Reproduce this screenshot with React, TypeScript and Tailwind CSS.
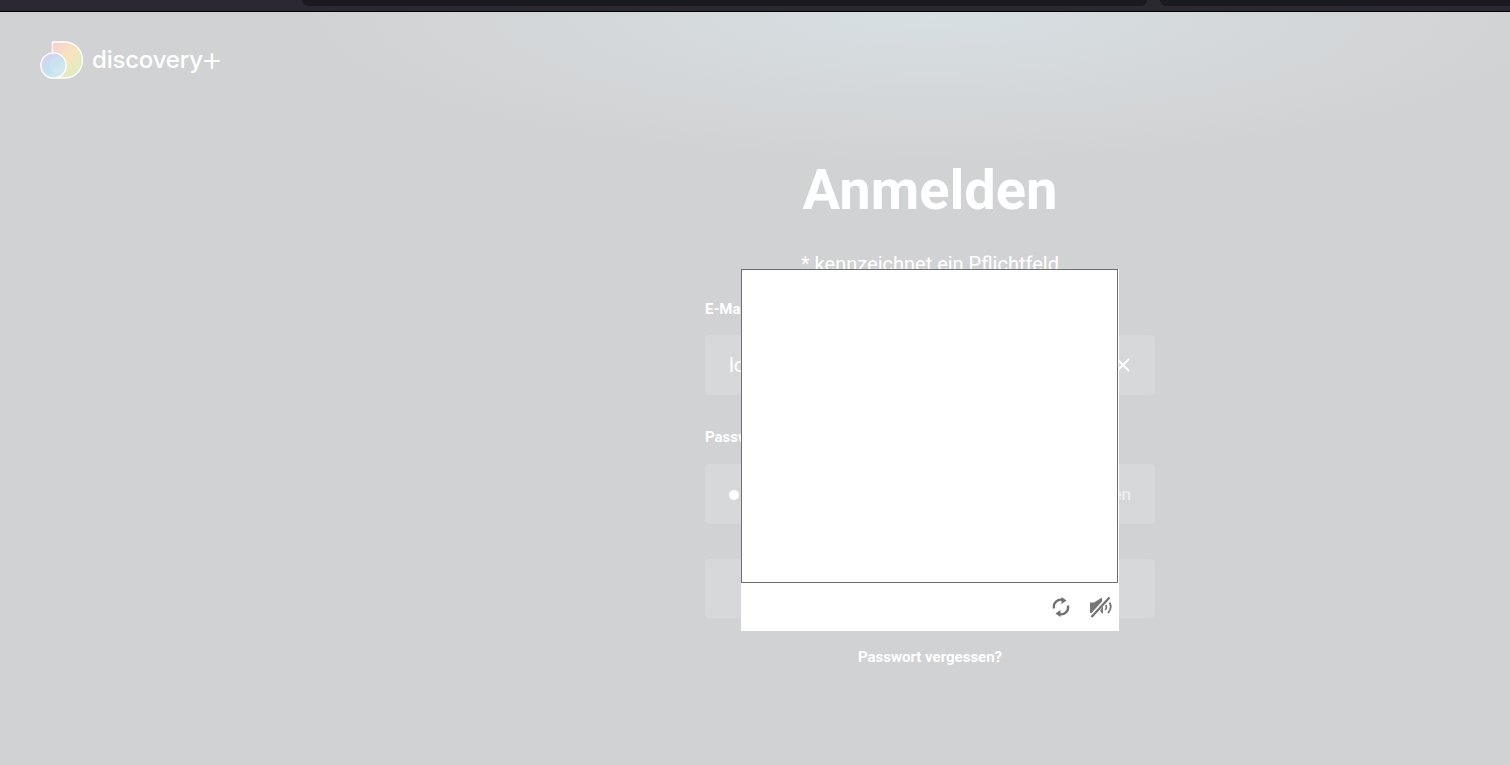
import { X } from "lucide-react";

function Logo() {
  return (
    <svg width="44" height="38" viewBox="0 0 44 38" fill="none">
      <defs>
        <linearGradient id="dGrad" x1="0" y1="0" x2="1" y2="1">
          <stop offset="0%" stopColor="#f7cfd0" />
          <stop offset="50%" stopColor="#f6e6bd" />
          <stop offset="100%" stopColor="#d3edc2" />
        </linearGradient>
        <linearGradient id="cGrad" x1="0" y1="0" x2="0.6" y2="1">
          <stop offset="0%" stopColor="#ddcdf0" />
          <stop offset="60%" stopColor="#c4e0f0" />
          <stop offset="100%" stopColor="#cfeaf0" />
        </linearGradient>
      </defs>
      <path
        d="M12.5 1 H24 C35 1 42.5 9 42.5 19 C42.5 29.5 35 37 24 37 H16 L12.5 12 Z"
        fill="url(#dGrad)"
        stroke="#fff"
        strokeWidth="1.3"
      />
      <circle cx="13.5" cy="24.5" r="12.6" fill="url(#cGrad)" stroke="#fff" strokeWidth="1.4" />
      <circle cx="17.5" cy="24" r="8" fill="#fff" fillOpacity="0.12" />
    </svg>
  );
}

function ReloadIcon() {
  return (
    <svg width="20" height="20" viewBox="0 0 20 20" fill="none">
      <path d="M3 11.5 A7.2 7.2 0 0 1 12 3" stroke="#6f6f6f" strokeWidth="2.3" />
      <path d="M10.5 0 L15.5 3.4 L10.5 7 Z" fill="#6f6f6f" />
      <path d="M17 8.5 A7.2 7.2 0 0 1 8 17" stroke="#6f6f6f" strokeWidth="2.3" />
      <path d="M9.5 20 L4.5 16.6 L9.5 13 Z" fill="#6f6f6f" />
    </svg>
  );
}

function MuteIcon() {
  return (
    <svg width="24" height="22" viewBox="0 0 24 22" fill="none">
      <path d="M1 6.5 H5 L13 1.5 V10 L5 17 H1 Z" fill="#767676" />
      <path d="M2 21 L20 1" stroke="#fff" strokeWidth="4.5" />
      <path d="M2.5 21 L20.5 1.5" stroke="#767676" strokeWidth="2.4" />
      <path d="M11 15 L14 10 V18 Z" fill="#767676" />
      <path d="M16 14 A4 4 0 0 0 16.8 9" stroke="#767676" strokeWidth="1.6" />
      <path d="M19 17 A9 9 0 0 0 20.5 6.5" stroke="#767676" strokeWidth="1.8" />
    </svg>
  );
}

export default function App() {
  return (
    <div className="relative h-[765px] overflow-hidden font-['Roboto',sans-serif] bg-[#d1d2d4] text-white">
      <div className="h-3 border-b border-black bg-[#2a2932] flex pl-[302px] gap-[13px]">
        <div className="w-[845px] h-[6px] rounded-b-md bg-[#1b1a20]" />
        <div className="flex-1 h-[6px] rounded-bl-md bg-[#1b1a20]" />
      </div>

      <div className="h-[753px] bg-[radial-gradient(ellipse_620px_150px_at_930px_0px,#d7dfe2_0%,#d4d7d9_60%,#d1d2d4_100%)]">
        <div className="flex items-center gap-2 pl-10 pt-[30px] h-[66px]">
          <Logo />
          <span className="flex items-center font-['Inter',sans-serif] text-[24px] font-medium tracking-[-0.2px] leading-none text-white">
            discovery
            <span className="text-[34px] font-light leading-none mt-[-3px] ml-[-2px]">+</span>
          </span>
        </div>

        <div className="flex justify-end pr-[355px]">
          <div className="w-[450px] flex flex-col">
            <h1 className="mt-[80px] text-center text-[56px] leading-[64px] font-bold">
              Anmelden
            </h1>
            <p className="mt-[28px] text-center text-[20px] leading-7">
              * kennzeichnet ein Pflichtfeld
            </p>
            <label className="mt-[21px] text-[15px] font-bold leading-5">
              E-Mail-Adresse*
            </label>
            <div className="mt-4 h-[60px] rounded bg-[#d7d8da] flex items-center justify-between pl-6 pr-[21px]">
              <span className="text-[20px]">lo</span>
              <X size={22} strokeWidth={2} />
            </div>
            <label className="mt-[32px] text-[15px] font-bold leading-5">
              Passwort*
            </label>
            <div className="mt-[17px] h-[60px] rounded bg-[#d7d8da] flex items-center justify-between pl-6 pr-6 pt-[2px]">
              <span className="w-[10px] h-[10px] rounded-full bg-white" />
              <span className="text-[17px] font-medium text-[#eeeeef]">Anzeigen</span>
            </div>
            <div className="mt-[35px] h-[59px] rounded bg-[#d7d8da]" />
            <a className="mt-[29px] text-center text-[15px] font-bold leading-5">
              Passwort vergessen?
            </a>
          </div>
        </div>
      </div>

      {/* captcha popup on top of the form */}
      <div className="absolute left-[741px] top-[269px] w-[378px] h-[362px] bg-white">
        <div className="w-[377px] h-[314px] border border-[#6e6e6e]" />
        <div className="flex justify-end items-center gap-[18px] pt-[13px] pr-[6px]">
          <ReloadIcon />
          <MuteIcon />
        </div>
      </div>
    </div>
  );
}
